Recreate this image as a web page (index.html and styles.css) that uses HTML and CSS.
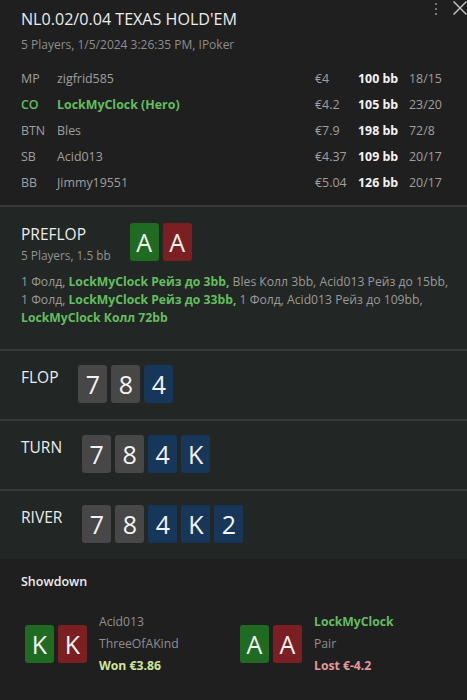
FILE: index.html
```html
<!DOCTYPE html>
<html lang="ru">
<head>
<meta charset="utf-8">
<title>Hand</title>
<link rel="stylesheet" href="styles.css">
</head>
<body>
<div class="app">
  <header class="head">
    <div class="title-row">
      <h1 class="title">NL0.02/0.04 TEXAS HOLD'EM</h1>
      <div class="winctl">
        <svg class="dots" width="4" height="14" viewBox="0 0 4 14"><circle cx="2" cy="2" r="1.1"/><circle cx="2" cy="7" r="1.1"/><circle cx="2" cy="12" r="1.1"/></svg>
        <svg class="xicon" width="14" height="14" viewBox="0 0 14 14"><line x1="0.5" y1="0.5" x2="13.5" y2="13.5"/><line x1="13.5" y1="0.5" x2="0.5" y2="13.5"/></svg>
      </div>
    </div>
    <div class="sub">5 Players, 1/5/2024 3:26:35 PM, IPoker</div>
  </header>

  <div class="players">
    <div class="prow"><span>MP</span><span>zigfrid585</span><span>€4</span><b>100 bb</b><span>18/15</span></div>
    <div class="prow hero"><span>CO</span><span>LockMyClock (Hero)</span><span>€4.2</span><b>105 bb</b><span>23/20</span></div>
    <div class="prow"><span>BTN</span><span>Bles</span><span>€7.9</span><b>198 bb</b><span>72/8</span></div>
    <div class="prow"><span>SB</span><span>Acid013</span><span>€4.37</span><b>109 bb</b><span>20/17</span></div>
    <div class="prow"><span>BB</span><span>Jimmy19551</span><span>€5.04</span><b>126 bb</b><span>20/17</span></div>
  </div>

  <section class="street preflop">
    <div class="street-head">
      <div class="label-col">
        <div class="label">PREFLOP</div>
        <div class="label-sub">5 Players, 1.5 bb</div>
      </div>
      <div class="cards">
        <span class="card green">A</span><span class="card red">A</span>
      </div>
    </div>
    <p class="actions">1 Фолд, <b>LockMyClock Рейз до 3bb,</b> Bles Колл 3bb, Acid013 Рейз до 15bb, 1 Фолд, <b>LockMyClock Рейз до 33bb,</b> 1 Фолд, Acid013 Рейз до 109bb, <b>LockMyClock Колл 72bb</b></p>
  </section>

  <section class="street board">
    <div class="label">FLOP</div>
    <div class="cards">
      <span class="card gray">7</span><span class="card gray">8</span><span class="card blue">4</span>
    </div>
  </section>

  <section class="street board">
    <div class="label">TURN</div>
    <div class="cards">
      <span class="card gray">7</span><span class="card gray">8</span><span class="card blue">4</span><span class="card blue">K</span>
    </div>
  </section>

  <section class="street board">
    <div class="label">RIVER</div>
    <div class="cards">
      <span class="card gray">7</span><span class="card gray">8</span><span class="card blue">4</span><span class="card blue">K</span><span class="card blue">2</span>
    </div>
  </section>

  <section class="showdown">
    <div class="sd-title">Showdown</div>
    <div class="sd-grid">
      <div class="sd-player">
        <div class="cards"><span class="card green">K</span><span class="card red">K</span></div>
        <div class="sd-info">
          <div class="sd-name">Acid013</div>
          <div class="sd-hand">ThreeOfAKind</div>
          <div class="sd-res won">Won €3.86</div>
        </div>
      </div>
      <div class="sd-player">
        <div class="cards"><span class="card green">A</span><span class="card red">A</span></div>
        <div class="sd-info">
          <div class="sd-name hero-name">LockMyClock</div>
          <div class="sd-hand">Pair</div>
          <div class="sd-res lost">Lost €-4.2</div>
        </div>
      </div>
    </div>
  </section>
</div>
</body>
</html>
```

FILE: styles.css
```css
* { box-sizing: border-box; }
html, body { margin: 0; padding: 0; }
body {
  background: #1f1f1f;
  font-family: "Open Sans", "Noto Sans", sans-serif;
  color: #a3a3a3;
  width: 467px;
  height: 700px;
  overflow: hidden;
}

.head { padding: 0 0 0 21px; }
.title-row { display: flex; justify-content: space-between; align-items: flex-start; }
.title {
  margin: 7px 0 0;
  font-size: 16.1px;
  line-height: 24px;
  font-weight: 400;
  color: #ececec;
}
.sub {
  margin-top: 4px;
  font-size: 12px;
  line-height: 20px;
  color: #8e8e8e;
}
.winctl { display: flex; gap: 15px; align-items: flex-start; padding-top: 1px; }
.dots { display: block; flex: none; fill: #8a8a8a; margin-top: 1px; }
.xicon { display: block; flex: none; stroke: #c2c2c2; stroke-width: 1.5; }

.players { padding: 11px 21px 9px; }
.prow {
  display: grid;
  grid-template-columns: 36px 1fr 43px 51px 37px;
  font-size: 12.4px;
  line-height: 26px;
  color: #9f9f9f;
  white-space: nowrap;
}
.prow b { color: #f2f2f2; font-weight: 700; }
.prow.hero span:nth-child(1), .prow.hero span:nth-child(2) { color: #62be5f; font-weight: 700; }
.prow.hero span:nth-child(1) { font-weight: 600; }

.street {
  background: #222624;
  border-top: 2px solid #363937;
}
.preflop { padding: 16px 16px 22px 21px; }
.street-head { display: flex; gap: 19px; align-items: flex-start; }
.label {
  font-size: 15.5px;
  line-height: 22px;
  color: #ececec;
}
.label-sub { font-size: 11.8px; line-height: 20px; color: #929292; }
.actions {
  margin: 8px 0 0;
  font-size: 12.2px;
  line-height: 18px;
  color: #9a9a9a;
}
.actions b { color: #62be5f; font-weight: 700; }

.board {
  display: flex;
  align-items: flex-start;
  gap: 20px;
  padding: 14px 21px 16px;
}
.board .label { line-height: 24px; }

.cards { display: flex; gap: 4px; }
.card {
  width: 29px;
  height: 38px;
  border-radius: 3px;
  display: flex;
  align-items: center;
  justify-content: center;
  font-size: 25px;
  color: #f4f4f4;
  line-height: 1;
}
.green { background: #1f6b22; }
.red { background: #7b1f22; }
.gray { background: #474747; }
.blue { background: #17375a; }

.showdown { padding: 13px 21px 0; }
.sd-title { font-size: 12.5px; line-height: 20px; font-weight: 600; color: #ededed; }
.sd-grid {
  display: grid;
  grid-template-columns: 215px 1fr;
  margin: 19px 0 0 4px;
}
.sd-player { display: flex; align-items: center; gap: 12px; }
.sd-info { font-size: 12.2px; line-height: 22px; color: #8f8f8f; }
.hero-name { color: #62be5f; font-weight: 700; }
.sd-res { font-weight: 700; }
.won { color: #cde69a; }
.lost { color: #e39a9a; }
```
